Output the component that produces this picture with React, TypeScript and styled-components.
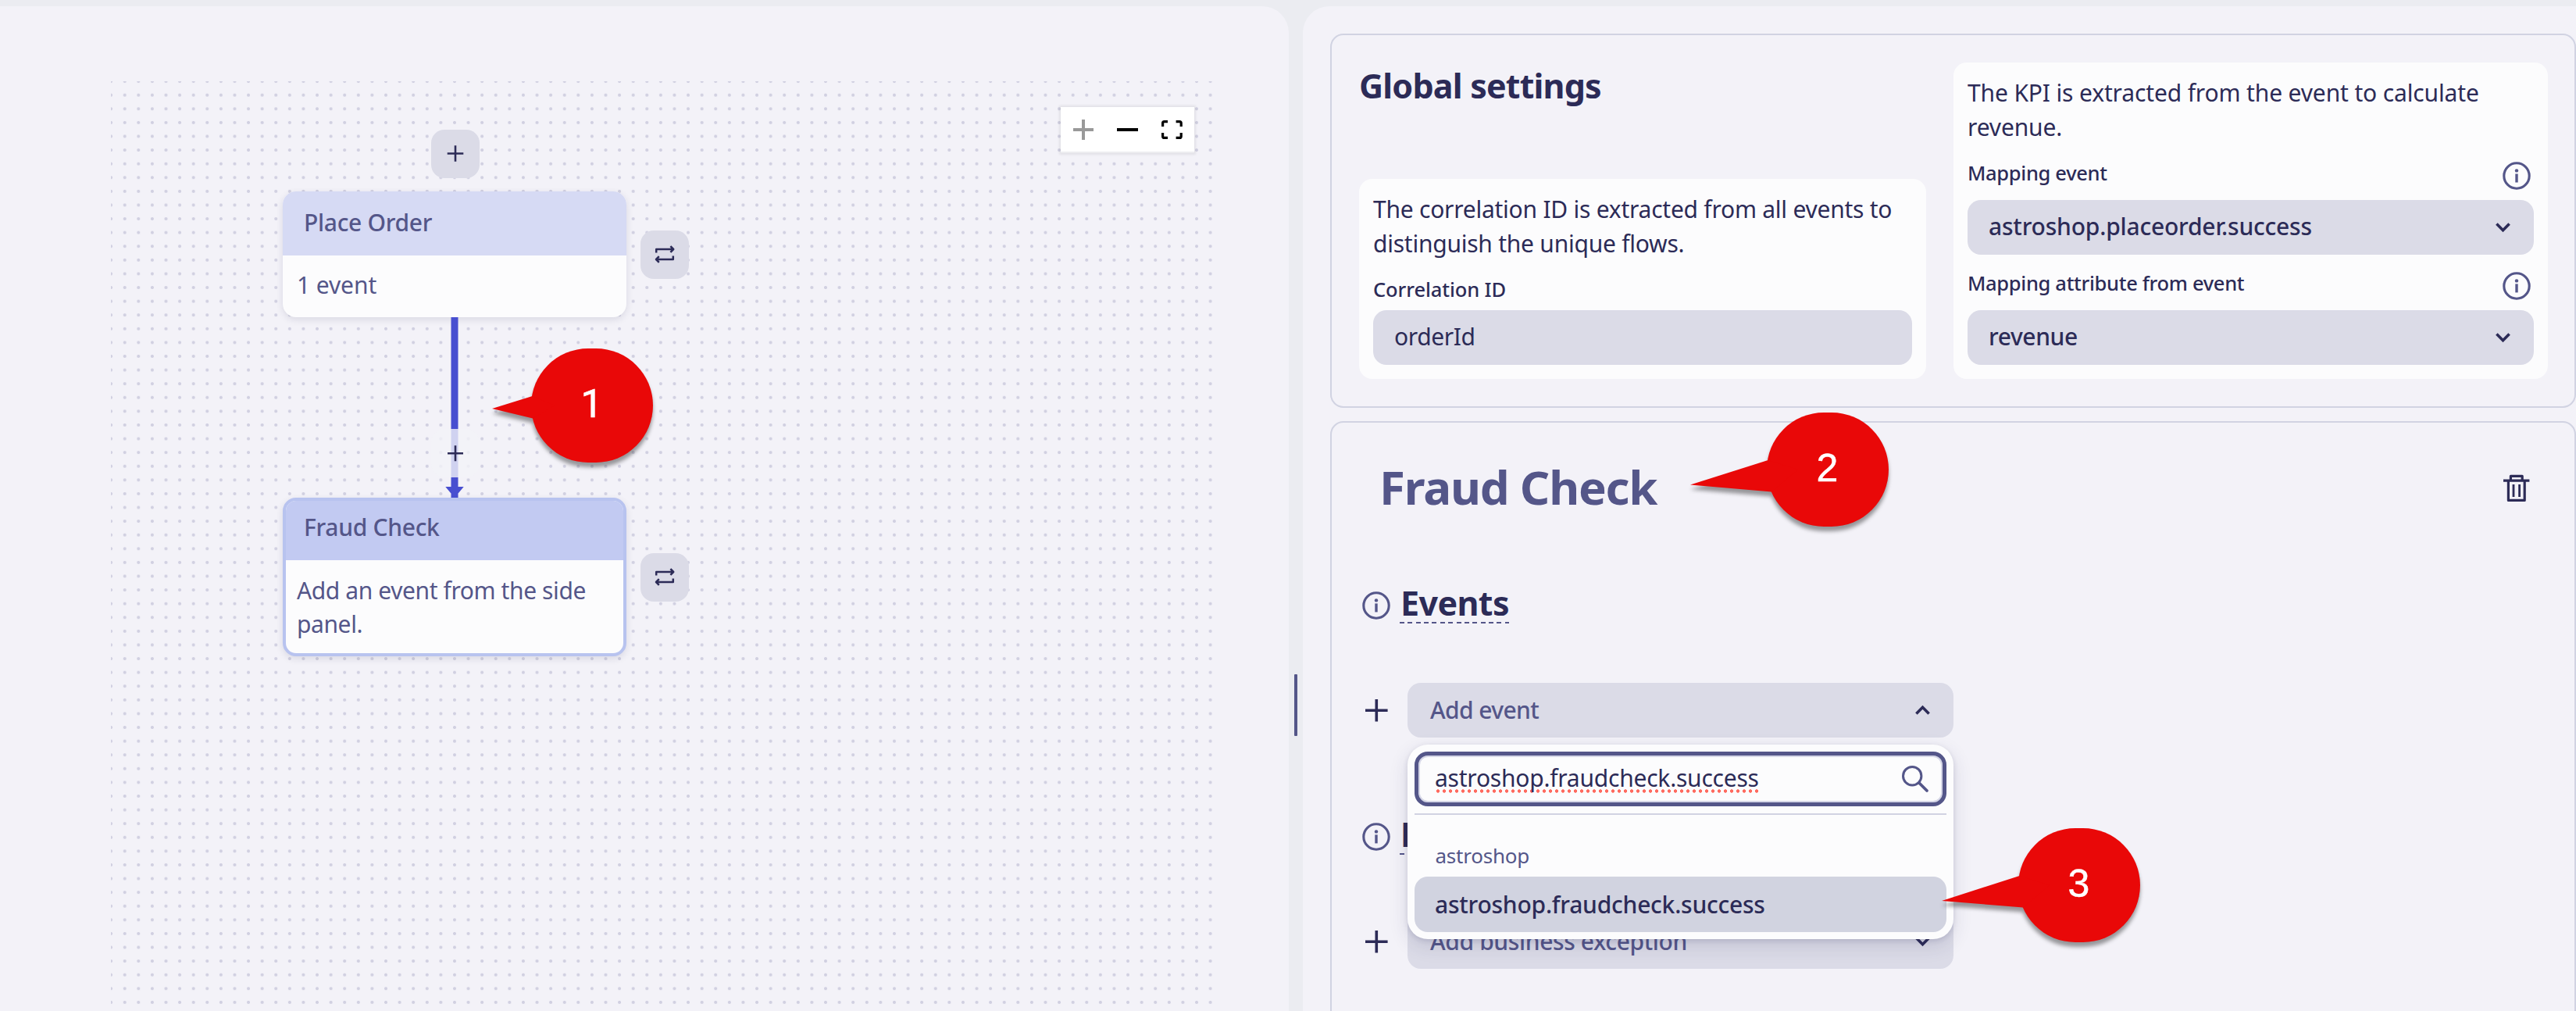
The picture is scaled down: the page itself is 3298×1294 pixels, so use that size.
import React from "react";
import styled, { createGlobalStyle } from "styled-components";

const c = {
  ink: "#2c2b57",
  soft: "#545689",
  panel: "#f3f2f8",
  gutter: "#ebecf1",
  line: "#d1d3e2",
  field: "#dbdbe7",
  white: "#fcfcfd",
  edge: "#484fd0",
  red: "#e90808",
};

const Global = createGlobalStyle`
  *, *::before, *::after { box-sizing: border-box; }
  body {
    margin: 0;
    background: ${c.gutter};
    color: ${c.ink};
    font-family: "Noto Sans", "Open Sans", sans-serif;
    font-size: 30px;
    letter-spacing: -0.23px;
  }
  svg { display: block; flex: none; overflow: visible; }
`;

const Shell = styled.div`
  position: relative;
  display: grid;
  grid-template-columns: 1650px 18px 1fr;
  width: 3298px;
  height: 1294px;
  padding-top: 8px;
  overflow: hidden;
`;

const CanvasPanel = styled.main`
  padding: 96px 0 0 142px;
  background: ${c.panel};
  border-top-right-radius: 34px;
`;

const Canvas = styled.div`
  position: relative;
  width: 1412px;
  height: 1190px;
  background-image: radial-gradient(circle at center, #d1d0e1 1.7px, transparent 2.3px);
  background-size: 17.6px 17.6px;
  background-position: -8.7px -8.7px;
`;

const ZoomBar = styled.div`
  position: absolute;
  top: 33px;
  left: 1216px;
  display: flex;
  width: 171px;
  height: 59px;
  background: #fff;
  border-bottom: 2px solid #ededf0;
  box-shadow: 0 0 3px 2px rgba(0, 0, 0, 0.07);
`;

const ZoomButton = styled.button<{ $muted?: boolean }>`
  flex: 1;
  display: grid;
  place-items: center;
  padding: 0;
  border: 0;
  background: none;
  color: ${(p) => (p.$muted ? "#999" : "#000")};
`;

const CanvasButton = styled.button<{ $x: number; $y: number; $ghost?: boolean }>`
  position: absolute;
  left: ${(p) => p.$x}px;
  top: ${(p) => p.$y}px;
  width: 62px;
  height: 62px;
  padding: 0;
  border: 0;
  border-radius: 17px;
  background: ${(p) => (p.$ghost ? "rgba(243, 242, 248, 0.8)" : c.field)};
  color: ${c.ink};
`;

const EdgeLine = styled.svg`
  position: absolute;
  left: 428px;
  top: 302px;
`;

const Node = styled.section<{ $y: number; $h: number; $selected?: boolean }>`
  position: absolute;
  left: 220px;
  top: ${(p) => p.$y}px;
  width: 440px;
  height: ${(p) => p.$h}px;
  overflow: hidden;
  border-radius: 17px;
  border: ${(p) => (p.$selected ? "4px solid #b8c3ef" : "0")};
  background: ${c.white};
  color: ${c.soft};
  box-shadow: 0 3px 10px rgba(30, 30, 70, 0.12);
`;

const NodeHead = styled.header<{ $selected?: boolean }>`
  display: flex;
  align-items: center;
  height: ${(p) => (p.$selected ? 76 : 82)}px;
  padding: ${(p) => (p.$selected ? "0 21px 8px 23px" : "0 25px 3px 27px")};
  background: ${(p) => (p.$selected ? "#c2caf2" : "#d6daf4")};
  font-weight: 500;
  letter-spacing: -0.3px;
`;

const NodeBody = styled.p<{ $selected?: boolean }>`
  margin: 0;
  padding: ${(p) => (p.$selected ? "17px 20px 0 14px" : "16px 18px 0 18px")};
  line-height: 43.7px;
  letter-spacing: ${(p) => (p.$selected ? -0.4 : -0.1)}px;
`;

const Splitter = styled.div`
  display: flex;
  justify-content: center;
  padding-top: 855px;
`;

const Grip = styled.div`
  width: 4px;
  height: 79px;
  border-radius: 1px;
  background: ${c.soft};
`;

const SidePanel = styled.aside`
  display: flex;
  flex-direction: column;
  gap: 17px;
  height: 1286px;
  padding: 35px 0 0 35px;
  background: ${c.panel};
  border-top-left-radius: 34px;
  overflow: hidden;
`;

const Card = styled.section`
  flex: none;
  border: 2px solid ${c.line};
  border-radius: 17px;
`;

const SettingsCard = styled(Card)`
  display: grid;
  grid-template-columns: 726px 761px;
  gap: 35px;
  height: 479px;
  padding: 35px 34px 35px 35px;
`;

const Column = styled.div`
  display: flex;
  flex-direction: column;
  justify-content: space-between;
`;

const Title = styled.h2`
  margin: 0;
  font-size: 43px;
  font-weight: 700;
  line-height: 60px;
  letter-spacing: -0.8px;
`;

const Box = styled.div`
  display: flex;
  flex-direction: column;
  padding: 17px 18px 18px;
  border-radius: 17px;
  background: ${c.white};
`;

const Description = styled.p<{ $spacing: number }>`
  height: 88px;
  margin: 0 0 18px;
  line-height: 44px;
  letter-spacing: ${(p) => p.$spacing}px;
`;

const Label = styled.label<{ $spacing?: number }>`
  height: 36px;
  font-size: 25.5px;
  font-weight: 500;
  line-height: 36px;
  letter-spacing: ${(p) => p.$spacing ?? -0.32}px;
`;

const LabelRow = styled.div`
  display: flex;
  justify-content: space-between;
  height: 53px;
  padding-right: 4px;
`;

const InfoSlot = styled.span<{ $top: number }>`
  padding-top: ${(p) => p.$top}px;
`;

const Field = styled.div<{ $weight: number; $gapTop?: number }>`
  display: flex;
  align-items: center;
  justify-content: space-between;
  height: 70px;
  margin-top: ${(p) => p.$gapTop ?? 0}px;
  padding: 0 30px 0 27px;
  border-radius: 17px;
  background: ${c.field};
  color: ${c.ink};
  font-weight: ${(p) => p.$weight};
`;

const Value = styled.span<{ $soft?: boolean; $spacing?: number }>`
  padding-bottom: ${(p) => (p.$soft ? 1 : 2)}px;
  padding-left: ${(p) => (p.$soft ? 2 : 0)}px;
  line-height: 44px;
  color: ${(p) => (p.$soft ? c.soft : c.ink)};
  letter-spacing: ${(p) => p.$spacing ?? -0.2}px;
`;

const Mapping = styled.div`
  & + & { margin-top: 18px; }
`;

const StepCard = styled(Card)`
  display: flex;
  flex-direction: column;
  height: 900px;
  padding: 42px 57px 0 39px;
`;

const StepHead = styled.header`
  display: flex;
  align-items: center;
  justify-content: space-between;
  height: 80px;
  margin-bottom: 82px;
  padding-left: 22px;
`;

const TrashSlot = styled.span`
  padding-top: 3px;
`;

const StepName = styled.h1`
  margin: 0;
  color: ${c.soft};
  font-size: 60px;
  font-weight: 700;
  line-height: 80px;
  letter-spacing: -1.2px;
`;

const SectionHead = styled.div`
  display: flex;
  gap: 12px;
  height: 53px;
  margin-bottom: 76px;
`;

const SectionTitle = styled.h3`
  margin: 0;
  padding-left: 1px;
  font-size: 43px;
  font-weight: 700;
  line-height: 53px;
  letter-spacing: -0.6px;
  background: repeating-linear-gradient(90deg, ${c.soft} 0 6px, transparent 6px 10.36px) left bottom / 100% 2.4px no-repeat;
`;

const AddRow = styled.div`
  display: flex;
  align-items: center;
  gap: 22px;
  height: 70px;
  margin-bottom: 97px;
`;

const PlusSlot = styled.span`
  display: grid;
  place-items: center;
  width: 36px;
`;

const SelectWrap = styled.div`
  position: relative;
  width: 699px;
`;

const Popup = styled.div`
  position: absolute;
  z-index: 2;
  top: 79px;
  left: 0;
  width: 699px;
  height: 249px;
  display: flex;
  flex-direction: column;
  padding: 9px;
  border-radius: 26px;
  background: ${c.white};
  box-shadow: 0 8px 24px rgba(40, 40, 90, 0.14), 0 2px 6px rgba(40, 40, 90, 0.14);
`;

const SearchBox = styled.div`
  display: flex;
  align-items: center;
  justify-content: space-between;
  height: 70px;
  padding: 0 18px 0 21px;
  border: 5px solid ${c.soft};
  border-radius: 17px;
  box-shadow: inset 0 0 0 2px #d5d6e6;
`;

const Query = styled.span`
  padding-bottom: 2px;
  line-height: 44px;
  background: radial-gradient(circle, #ff6b60 1.9px, transparent 2.5px) left 0 bottom 5px / 8px 5px repeat-x;
`;

const Divider = styled.div`
  height: 2px;
  margin: 9px 0 34px;
  background: ${c.line};
`;

const Group = styled.div`
  margin-bottom: 9px;
  padding-left: 26.5px;
  color: ${c.soft};
  font-size: 26px;
  line-height: 36px;
`;

const Option = styled.div`
  display: flex;
  align-items: center;
  height: 71px;
  padding: 0 25px 1px 26px;
  border-radius: 17px;
  background: #d1d3e0;
  font-weight: 500;
`;

const CalloutBox = styled.div<{ $x: number; $y: number }>`
  position: absolute;
  z-index: 5;
  left: ${(p) => p.$x}px;
  top: ${(p) => p.$y}px;
  width: 156px;
  height: 146px;
`;

const Bubble = styled.svg`
  filter: drop-shadow(0 6px 2.5px rgba(0, 0, 0, 0.38));
`;

const Digit = styled.span<{ $font: string }>`
  position: absolute;
  inset: 0 1px 4px 0;
  display: grid;
  place-items: center;
  color: #fff;
  font-family: ${(p) => p.$font}, sans-serif;
  font-size: 50px;
  letter-spacing: 0;
  -webkit-text-stroke: 0.5px #fff;
`;

const Plus = ({ size, stroke }: { size: number; stroke: number }) => (
  <svg width={size} height={size} viewBox={`0 0 ${size} ${size}`} stroke="currentColor" strokeWidth={stroke}>
    <path d={`M0 ${size / 2}H${size}M${size / 2} 0V${size}`} />
  </svg>
);

const Info = () => (
  <svg width="36" height="36" viewBox="0 0 36 36" fill="none">
    <circle cx="18" cy="18" r="16.2" stroke={c.soft} strokeWidth="3.1" />
    <circle cx="18" cy="11.4" r="2.2" fill={c.soft} />
    <path d="M18 15.4V26.4" stroke={c.soft} strokeWidth="3.4" />
  </svg>
);

const Chevron = ({ up }: { up?: boolean }) => (
  <svg width="19" height="12" viewBox="0 0 19 12" fill="none" stroke={c.ink} strokeWidth="3.6">
    <path d={up ? "M1.4 10.4 9.5 2.3 17.6 10.4" : "M1.4 1.6 9.5 9.7 17.6 1.6"} />
  </svg>
);

const Repeat = () => (
  <svg width="62" height="62" viewBox="0 0 62 62" fill="none" stroke={c.ink} strokeWidth="2.5" strokeLinejoin="round">
    <path d="M20.2 28.6V24H42M38.4 20.2 42.2 24 38.4 27.8" />
    <path d="M41.8 32.4V37H20M23.8 33.2 20 37 23.8 40.8" />
  </svg>
);

const Trash = () => (
  <svg width="34" height="36" viewBox="0 0 34 36" fill="none" stroke={c.ink} strokeWidth="3.2">
    <path d="M0 8.2H33.4M9.4 8V2.4H24.2V8M6.4 8V33.4H27.2V8" strokeLinejoin="round" />
    <path d="M13 13V29M20.6 13V29" strokeWidth="2.8" />
  </svg>
);

const Search = () => (
  <svg width="34" height="34" viewBox="0 0 34 34" fill="none" stroke={c.soft} strokeLinecap="round">
    <circle cx="13.2" cy="13.2" r="11.7" strokeWidth="3" />
    <path d="M22 22 32 32" strokeWidth="3.8" />
  </svg>
);

const Minus = () => (
  <svg width="27" height="4" viewBox="0 0 27 4">
    <path d="M0 2H27" stroke="currentColor" strokeWidth="4" />
  </svg>
);

const FitView = () => (
  <svg width="27" height="24" viewBox="0 0 27 24" fill="none" stroke="currentColor" strokeWidth="3.2">
    <path d="M1.6 8V3.6Q1.6 1.6 3.6 1.6H8M18.6 1.6H23.2Q25.2 1.6 25.2 3.6V8M25.2 16V20.4Q25.2 22.4 23.2 22.4H18.6M8 22.4H3.6Q1.6 22.4 1.6 20.4V16" />
  </svg>
);

type CalloutProps = { x: number; y: number; n: number; tail: string; font?: string };

const Callout = ({ x, y, n, tail, font = '"Liberation Sans"' }: CalloutProps) => (
  <CalloutBox $x={x} $y={y}>
    <Bubble width="156" height="146" viewBox="0 0 156 146" fill={c.red}>
      <rect width="156" height="146" rx="73" />
      <polygon points={tail} />
    </Bubble>
    <Digit $font={font}>{n}</Digit>
  </CalloutBox>
);

export default function App() {
  return (
    <>
      <Global />
      <Shell>
        <CanvasPanel>
          <Canvas>
            <ZoomBar>
              <ZoomButton $muted><Plus size={26} stroke={4} /></ZoomButton>
              <ZoomButton><Minus /></ZoomButton>
              <ZoomButton><FitView /></ZoomButton>
            </ZoomBar>
            <Node $y={141} $h={161}>
              <NodeHead>Place Order</NodeHead>
              <NodeBody>1 event</NodeBody>
            </Node>
            <Node $y={532.5} $h={203.5} $selected>
              <NodeHead $selected>Fraud Check</NodeHead>
              <NodeBody $selected>Add an event from the side panel.</NodeBody>
            </Node>
            <EdgeLine width="24" height="231" viewBox="0 0 24 231" fill={c.edge}>
              <path d="M7.5 0H16.5V231H7.5ZM.3 217H23.7L12 231Z" />
            </EdgeLine>
            <CanvasButton $x={409.5} $y={62}>
              <svg width="62" height="62" viewBox="0 0 62 62" stroke={c.ink} strokeWidth="2.6">
                <path d="M20.7 30.5H41.3M31 20.2V40.8" />
              </svg>
            </CanvasButton>
            <CanvasButton $x={409.5} $y={444.5} $ghost>
              <svg width="62" height="62" viewBox="0 0 62 62" stroke={c.ink} strokeWidth="2.6">
                <path d="M21 31.2H41M31 21.2V41.2" />
              </svg>
            </CanvasButton>
            <CanvasButton $x={677.5} $y={191}><Repeat /></CanvasButton>
            <CanvasButton $x={677.5} $y={604}><Repeat /></CanvasButton>
          </Canvas>
        </CanvasPanel>

        <Splitter><Grip /></Splitter>

        <SidePanel>
          <SettingsCard>
            <Column>
              <Title>Global settings</Title>
              <Box>
                <Description $spacing={-0.24}>
                  The correlation ID is extracted from all events to distinguish the unique flows.
                </Description>
                <Label $spacing={-0.1}>Correlation ID</Label>
                <Field $weight={400} $gapTop={9}><Value $spacing={-0.4}>orderId</Value></Field>
              </Box>
            </Column>
            <Box>
              <Description $spacing={-0.14}>
                The KPI is extracted from the event to calculate revenue.
              </Description>
              <Mapping>
                <LabelRow>
                  <Label>Mapping event</Label>
                  <InfoSlot $top={4}><Info /></InfoSlot>
                </LabelRow>
                <Field $weight={500}><Value>astroshop.placeorder.success</Value><Chevron /></Field>
              </Mapping>
              <Mapping>
                <LabelRow>
                  <Label>Mapping attribute from event</Label>
                  <InfoSlot $top={4}><Info /></InfoSlot>
                </LabelRow>
                <Field $weight={500}><Value $spacing={-0.4}>revenue</Value><Chevron /></Field>
              </Mapping>
            </Box>
          </SettingsCard>

          <StepCard>
            <StepHead>
              <StepName>Fraud Check</StepName>
              <TrashSlot><Trash /></TrashSlot>
            </StepHead>
            <SectionHead>
              <InfoSlot $top={12}><Info /></InfoSlot>
              <SectionTitle>Events</SectionTitle>
            </SectionHead>
            <AddRow>
              <PlusSlot><Plus size={28.6} stroke={3.6} /></PlusSlot>
              <SelectWrap>
                <Field $weight={500}><Value $soft $spacing={-0.6}>Add event</Value><Chevron up /></Field>
                <Popup>
                  <SearchBox>
                    <Query>astroshop.fraudcheck.success</Query>
                    <Search />
                  </SearchBox>
                  <Divider />
                  <Group>astroshop</Group>
                  <Option>astroshop.fraudcheck.success</Option>
                </Popup>
              </SelectWrap>
            </AddRow>
            <SectionHead>
              <InfoSlot $top={12}><Info /></InfoSlot>
              <SectionTitle>Business exceptions</SectionTitle>
            </SectionHead>
            <AddRow>
              <PlusSlot><Plus size={28.6} stroke={3.6} /></PlusSlot>
              <SelectWrap>
                <Field $weight={500}><Value $soft $spacing={-0.38}>Add business exception</Value><Chevron /></Field>
              </SelectWrap>
            </AddRow>
          </StepCard>
        </SidePanel>

        <Callout x={680} y={446} n={1} tail="-50,77 1.5,61 30,73 2,89.5" font="Roboto" />
        <Callout x={2262} y={528} n={2} tail="-98,92.5 1.5,61 40,73 6,101.5" />
        <Callout x={2584} y={1060} n={3} tail="-98,93 1.5,61 40,73 6,101.5" />
      </Shell>
    </>
  );
}
